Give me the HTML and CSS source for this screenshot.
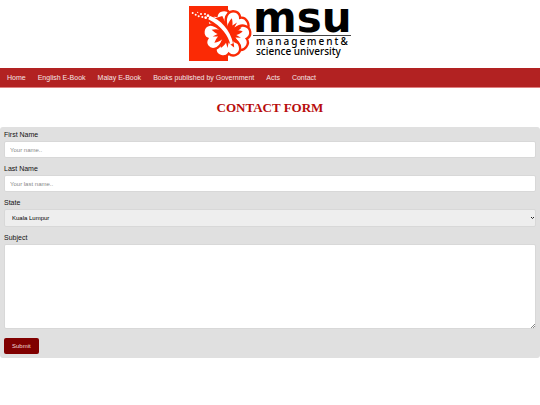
FILE: index.html
```html
<!DOCTYPE html>
<html lang="en">
<head>
<meta charset="utf-8">
<title>Contact Form</title>
<link rel="stylesheet" href="styles.css">
</head>
<body>
<header class="logo">
  <svg class="flower" viewBox="0 0 192 165" aria-hidden="true">
    <defs>
      <path id="petal" d="M-4-4C-14-18-38-22-38-46C-38-64-16-74-3-61C8-76 34-68 36-50C39-28 12-20 4-4Z"/>
      <path id="vein" d="M-8 0C-9-12-21-22-20-43C-13-38-8-34-4-28L0-44L4-28C8-34 13-38 20-43C21-22 9-12 8 0Z"/>
    </defs>
    <rect class="red" width="117" height="165"/>
    <g transform="translate(114 82)">
      <g class="outline">
        <use href="#petal" transform="rotate(-28)"/>
        <use href="#petal" transform="rotate(43)"/>
        <use href="#petal" transform="rotate(108)"/>
        <use href="#petal" transform="rotate(178)"/>
        <use href="#petal" transform="rotate(258)"/>
      </g>
      <g class="red">
        <use href="#vein" transform="rotate(43)"/>
        <use href="#vein" transform="rotate(108)"/>
        <use href="#vein" transform="rotate(178)"/>
        <use href="#vein" transform="rotate(258)"/>
        <path d="M14 8L-14-52L-34-46L-70-58L-66-42L-14-6L0 10Z"/>
      </g>
      <path class="white" d="M10 34C4 8-14-20-56-42L-52-53C-20-42 10-10 18 30Z"/>
    </g>
    <g class="white">
      <circle cx="11" cy="21" r="3"/><circle cx="20" cy="26" r="3"/><circle cx="26" cy="19" r="2"/>
      <circle cx="29" cy="31" r="3"/><circle cx="36" cy="24" r="3"/><circle cx="40" cy="33" r="3"/>
      <circle cx="48" cy="24" r="3"/><circle cx="50" cy="35" r="4"/><circle cx="57" cy="29" r="4"/>
    </g>
  </svg>
  <div class="wordmark">
    <div class="msu">msu</div>
    <div class="line-one">management&amp;</div>
    <div class="line-two">science university</div>
  </div>
</header>
<nav class="nav">
  <a href="#">Home</a>
  <a href="#">English E-Book</a>
  <a href="#">Malay E-Book</a>
  <a href="#">Books published by Government</a>
  <a href="#">Acts</a>
  <a href="#">Contact</a>
</nav>
<main>
  <h1>CONTACT FORM</h1>
  <form class="panel">
    <label for="fname">First Name</label>
    <input type="text" id="fname" placeholder="Your name..">
    <label for="lname">Last Name</label>
    <input type="text" id="lname" placeholder="Your last name..">
    <label for="state">State</label>
    <div class="field">
      <select id="state"><option>Kuala Lumpur</option></select>
      <svg class="arrow" viewBox="0 0 5 4" aria-hidden="true"><path d="M1 1L2.500 2.500L4 1"/></svg>
    </div>
    <label for="subject">Subject</label>
    <div class="field">
      <textarea id="subject"></textarea>
      <svg class="grip" viewBox="0 0 4 4" aria-hidden="true"><path d="M0 4L4 0M2 4L4 2"/></svg>
    </div>
    <button type="submit">Submit</button>
  </form>
</main>
</body>
</html>
```
FILE: styles.css
```css
* {
  box-sizing: border-box;
}

body {
  margin: 0;
  background: #fff;
  color: #111;
  font-family: "Liberation Sans", Arial, sans-serif;
  font-size: 7px;
}

.logo {
  display: flex;
  justify-content: center;
  height: 68px;
  padding-top: 6px;
}

.flower {
  width: 64px;
  height: 55px;
}

.red {
  fill: #fb2a05;
}

.white {
  fill: #fff;
}

.outline {
  fill: #fff;
  stroke: #fb2a05;
  stroke-width: 7px;
}

.wordmark {
  width: 98px;
  color: #000;
  font-family: "Noto Sans", sans-serif;
  white-space: nowrap;
}

.msu {
  height: 30px;
  border-bottom: 1px solid #444;
  font: bold 42px/24px "DejaVu Sans", sans-serif;
}

.line-one,
.line-two {
  padding-left: 3px;
  font-weight: 500;
  font-size: 10px;
  line-height: 10px;
}

.line-one {
  letter-spacing: 2px;
}

.nav {
  display: flex;
  padding-left: 1px;
  background: #b22222;
  border-bottom: 1px solid #e08080;
}

.nav a {
  padding: 5px 6px;
  color: #f5e4e4;
  line-height: 9px;
  text-decoration: none;
}

h1 {
  margin: 12px 0;
  color: #b80d0d;
  font: bold 13px/15px "Liberation Serif", "Times New Roman", serif;
  text-align: center;
}

.panel {
  padding: 4px;
  border-radius: 3px;
  background: #e0e0e0;
}

label {
  display: block;
  line-height: 8px;
}

input,
select,
textarea {
  display: block;
  width: 100%;
  height: 17px;
  margin: 2px 0 7px;
  padding: 5px;
  border: 1px solid #d8d8d8;
  border-radius: 2px;
  background: #fff;
  font: 6px "Liberation Sans", Arial, sans-serif;
}

input::placeholder {
  color: #888;
}

.field {
  position: relative;
}

select {
  height: 18px;
  padding: 0 7px;
  background: #eee;
  appearance: none;
}

.arrow {
  position: absolute;
  top: 7px;
  right: 1px;
  width: 5px;
  height: 4px;
  fill: none;
  stroke: #222;
}

textarea {
  height: 85px;
  margin-bottom: 9px;
  resize: none;
}

.grip {
  position: absolute;
  right: 1px;
  bottom: 1px;
  width: 4px;
  height: 4px;
  stroke: #888;
  stroke-width: 1px;
}

button {
  display: block;
  padding: 5px 8px;
  border: 0;
  border-radius: 2px;
  background: #800000;
  color: #f0dcdc;
  font: 6px/6px "Liberation Sans", Arial, sans-serif;
}
```
